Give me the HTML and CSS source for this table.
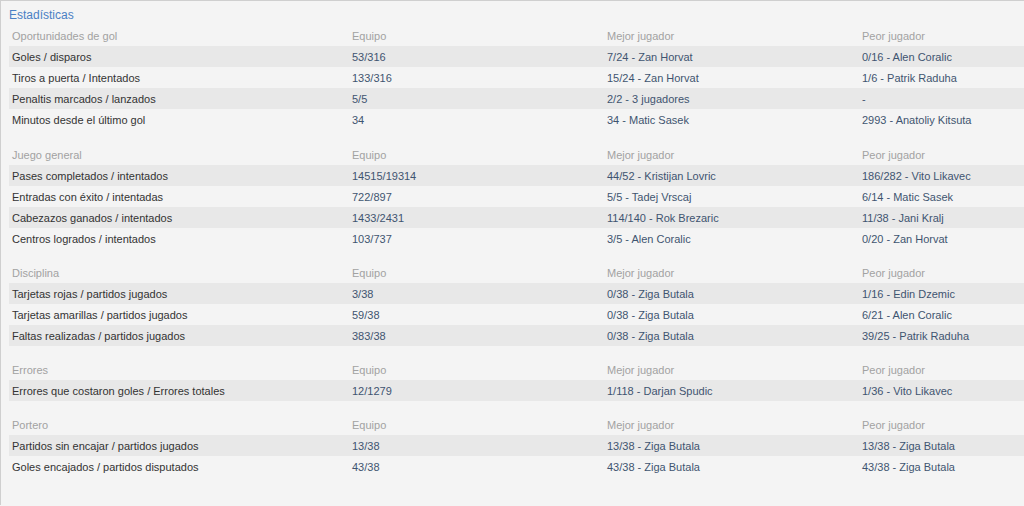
FILE: index.html
```html
<!DOCTYPE html>
<html lang="es">
<head>
<meta charset="utf-8">
<title>Estadísticas</title>
<link rel="stylesheet" href="styles.css">
</head>
<body>
<div class="panel">
  <div class="title">Estadísticas</div>

  <div class="section first">
    <div class="row head"><span>Oportunidades de gol</span><span>Equipo</span><span>Mejor jugador</span><span>Peor jugador</span></div>
    <div class="row odd"><span class="lbl">Goles / disparos</span><span>53/316</span><span>7/24 - Zan Horvat</span><span>0/16 - Alen Coralic</span></div>
    <div class="row"><span class="lbl">Tiros a puerta / Intentados</span><span>133/316</span><span>15/24 - Zan Horvat</span><span>1/6 - Patrik Raduha</span></div>
    <div class="row odd"><span class="lbl">Penaltis marcados / lanzados</span><span>5/5</span><span>2/2 - 3 jugadores</span><span>-</span></div>
    <div class="row"><span class="lbl">Minutos desde el último gol</span><span>34</span><span>34 - Matic Sasek</span><span>2993 - Anatoliy Kitsuta</span></div>
  </div>

  <div class="section">
    <div class="row head"><span>Juego general</span><span>Equipo</span><span>Mejor jugador</span><span>Peor jugador</span></div>
    <div class="row odd"><span class="lbl">Pases completados / intentados</span><span>14515/19314</span><span>44/52 - Kristijan Lovric</span><span>186/282 - Vito Likavec</span></div>
    <div class="row"><span class="lbl">Entradas con éxito / intentadas</span><span>722/897</span><span>5/5 - Tadej Vrscaj</span><span>6/14 - Matic Sasek</span></div>
    <div class="row odd"><span class="lbl">Cabezazos ganados / intentados</span><span>1433/2431</span><span>114/140 - Rok Brezaric</span><span>11/38 - Jani Kralj</span></div>
    <div class="row"><span class="lbl">Centros logrados / intentados</span><span>103/737</span><span>3/5 - Alen Coralic</span><span>0/20 - Zan Horvat</span></div>
  </div>

  <div class="section">
    <div class="row head"><span>Disciplina</span><span>Equipo</span><span>Mejor jugador</span><span>Peor jugador</span></div>
    <div class="row odd"><span class="lbl">Tarjetas rojas / partidos jugados</span><span>3/38</span><span>0/38 - Ziga Butala</span><span>1/16 - Edin Dzemic</span></div>
    <div class="row"><span class="lbl">Tarjetas amarillas / partidos jugados</span><span>59/38</span><span>0/38 - Ziga Butala</span><span>6/21 - Alen Coralic</span></div>
    <div class="row odd"><span class="lbl">Faltas realizadas / partidos jugados</span><span>383/38</span><span>0/38 - Ziga Butala</span><span>39/25 - Patrik Raduha</span></div>
  </div>

  <div class="section">
    <div class="row head"><span>Errores</span><span>Equipo</span><span>Mejor jugador</span><span>Peor jugador</span></div>
    <div class="row odd"><span class="lbl">Errores que costaron goles / Errores totales</span><span>12/1279</span><span>1/118 - Darjan Spudic</span><span>1/36 - Vito Likavec</span></div>
  </div>

  <div class="section">
    <div class="row head"><span>Portero</span><span>Equipo</span><span>Mejor jugador</span><span>Peor jugador</span></div>
    <div class="row odd"><span class="lbl">Partidos sin encajar / partidos jugados</span><span>13/38</span><span>13/38 - Ziga Butala</span><span>13/38 - Ziga Butala</span></div>
    <div class="row"><span class="lbl">Goles encajados / partidos disputados</span><span>43/38</span><span>43/38 - Ziga Butala</span><span>43/38 - Ziga Butala</span></div>
  </div>
</div>
</body>
</html>
```

FILE: styles.css
```css
html, body {
  margin: 0;
  padding: 0;
  background: #f4f4f4;
}
body {
  font-family: "Liberation Sans", Arial, Helvetica, sans-serif;
  font-size: 11px;
}
.panel {
  border-top: 1px solid #cfcfcf;
  border-left: 1px solid #cfcfcf;
  min-height: 505px;
  box-sizing: border-box;
  padding: 5px 0 0 8px;
  background: #f4f4f4;
}
.title {
  color: #4a80c4;
  font-size: 12px;
  line-height: 18px;
  margin-bottom: 1px;
}
.section {
  margin-bottom: 13px;
}
.section.first {
  margin-bottom: 14px;
}
.row {
  display: grid;
  grid-template-columns: 340px 255px 255px 1fr;
  height: 21px;
  align-items: center;
  color: #3f5470;
}
.row > span {
  padding-left: 3px;
  white-space: nowrap;
}
.row .lbl {
  color: #333333;
}
.row.odd {
  background: #e8e8e8;
}
.row.head {
  color: #a2a2a2;
}
```
